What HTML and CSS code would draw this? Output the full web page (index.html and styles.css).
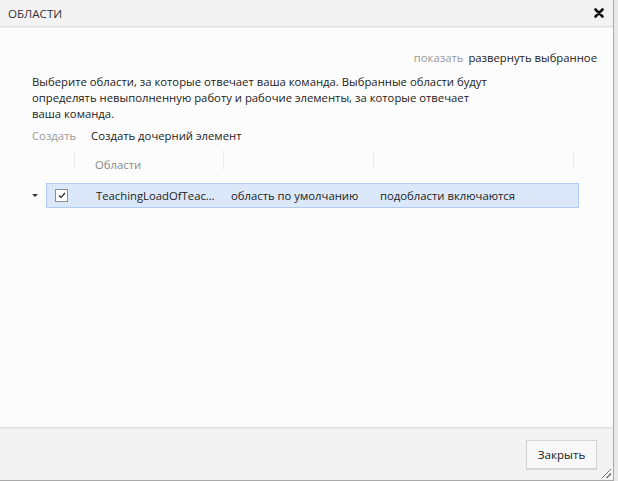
FILE: index.html
```html
<!DOCTYPE html>
<html lang="ru">
<head>
    <meta charset="UTF-8">
    <title>Области</title>
    <link rel="stylesheet" href="styles.css">
</head>
<body>
    <div class="dialog">
        <div class="titlebar">
            <span class="title">ОБЛАСТИ</span>
            <svg class="close" width="10" height="10" viewBox="0 0 10 10">
                <path d="M1.5 1.5 L8.5 8.5 M8.5 1.5 L1.5 8.5" stroke="#111" stroke-width="2.6" stroke-linecap="round"/>
            </svg>
        </div>

        <div class="content">
            <div class="view_bar">
                <span class="muted">показать</span>
                <span class="view_link">развернуть выбранное</span>
            </div>

            <p class="hint">Выберите области, за которые отвечает ваша команда. Выбранные области будут<br>
                определять невыполненную работу и рабочие элементы, за которые отвечает<br>
                ваша команда.</p>

            <div class="commands">
                <span class="muted">Создать</span>
                <span class="cmd">Создать дочерний элемент</span>
            </div>

            <div class="grid">
                <div class="grid_head">
                    <div class="head_pad"></div>
                    <div class="hcell col_name">Области</div>
                    <div class="hcell col_def"></div>
                    <div class="hcell col_sub"></div>
                    <div class="hcell col_end"></div>
                </div>
                <div class="grid_row">
                    <div class="toggle"><span class="arrow"></span></div>
                    <div class="row_box">
                        <div class="cell col_check">
                            <span class="checkbox">
                                <svg width="8" height="7" viewBox="0 0 8 7">
                                    <path d="M1 3.5 L3 5.5 L7 1" fill="none" stroke="#222" stroke-width="1.2"/>
                                </svg>
                            </span>
                        </div>
                        <div class="cell col_name_row">TeachingLoadOfTeachers</div>
                        <div class="cell col_def">область по умолчанию</div>
                        <div class="cell col_sub">подобласти включаются</div>
                    </div>
                </div>
            </div>
        </div>

        <div class="footer">
            <button class="btn">Закрыть</button>
            <span class="grip"></span>
        </div>
    </div>
</body>
</html>
```

FILE: styles.css
```css
body {
    margin: 0;
    background-color: #e9e9e9;
    font-family: "Open Sans", "Noto Sans", sans-serif;
    font-size: 11.3px;
    color: #222;
}
.dialog {
    width: 613px;
    height: 480px;
    border-right: 1px solid #a9a9a9;
    border-bottom: 1px solid #a9a9a9;
    background-color: #fcfcfc;
    display: flex;
    flex-direction: column;
}
.titlebar {
    height: 26px;
    padding: 0 9px 0 8px;
    display: flex;
    align-items: center;
    justify-content: space-between;
    background-color: #f3f3f3;
    border-bottom: 1px solid #dedede;
    box-shadow: 0 1px 0 #f0f0f0;
}
.title {
    color: #333;
    font-size: 11.6px;
}
.content {
    flex: 1;
    padding: 23px 16px 0 32px;
}
.muted {
    color: #9a9a9a;
}
.view_bar {
    text-align: right;
    line-height: 16px;
}
.view_link {
    margin-left: 2px;
    color: #222;
}
.hint {
    margin: 8px 0 0;
    line-height: 16px;
    white-space: nowrap;
}
.commands {
    margin-top: 6px;
    line-height: 16px;
}
.cmd {
    margin-left: 12px;
}
.grid {
    margin-top: 6px;
}
.grid_head {
    display: flex;
    height: 20px;
}
.head_pad {
    width: 42px;
}
.hcell {
    border-left: 1px solid #ececec;
    line-height: 30px;
    height: 20px;
    color: #888;
}
.col_name {
    width: 128px;
    padding-left: 20px;
}
.col_def {
    width: 140px;
    padding-left: 9px;
}
.col_sub {
    width: 192px;
    padding-left: 7px;
}
.col_end {
    width: 10px;
}
.grid_row {
    display: flex;
    align-items: center;
    margin-top: 13px;
}
.toggle {
    width: 14px;
}
.arrow {
    display: block;
    width: 0;
    height: 0;
    border-left: 3px solid transparent;
    border-right: 3px solid transparent;
    border-top: 3px solid #333;
}
.row_box {
    width: 531px;
    height: 23px;
    display: flex;
    align-items: center;
    background-color: #dae8fa;
    border: 1px solid #b0cdf1;
}
.cell {
    white-space: nowrap;
    overflow: hidden;
}
.col_check {
    width: 40px;
    padding-left: 8px;
    display: flex;
}
.checkbox {
    width: 11px;
    height: 11px;
    border: 1px solid #8e8e8e;
    background-color: #fff;
    display: flex;
    align-items: center;
    justify-content: center;
}
.col_name_row {
    width: 120px;
    padding-left: 1px;
    margin-right: 15px;
    text-overflow: ellipsis;
}
.row_box .col_def {
    width: 149px;
    padding-left: 0;
}
.row_box .col_sub {
    width: 190px;
    padding-left: 0;
}
.footer {
    height: 52px;
    position: relative;
    display: flex;
    align-items: center;
    justify-content: flex-end;
    padding-right: 16px;
    background-color: #f3f3f3;
    border-top: 1px solid #dedede;
    box-shadow: inset 0 1px 0 #ececec;
}
.btn {
    width: 71px;
    height: 29px;
    font-family: inherit;
    font-size: 11.6px;
    color: #222;
    background-color: #f8f8f8;
    border: 1px solid #d4d4d4;
    box-shadow: 0 1px 1px #dadada;
    padding: 0;
}
.grip {
    position: absolute;
    right: 2px;
    bottom: 2px;
    width: 9px;
    height: 9px;
    background: linear-gradient(135deg, transparent 45%, #777 45%, #777 55%, transparent 55%, transparent 70%, #777 70%, #777 80%, transparent 80%);
}
```
